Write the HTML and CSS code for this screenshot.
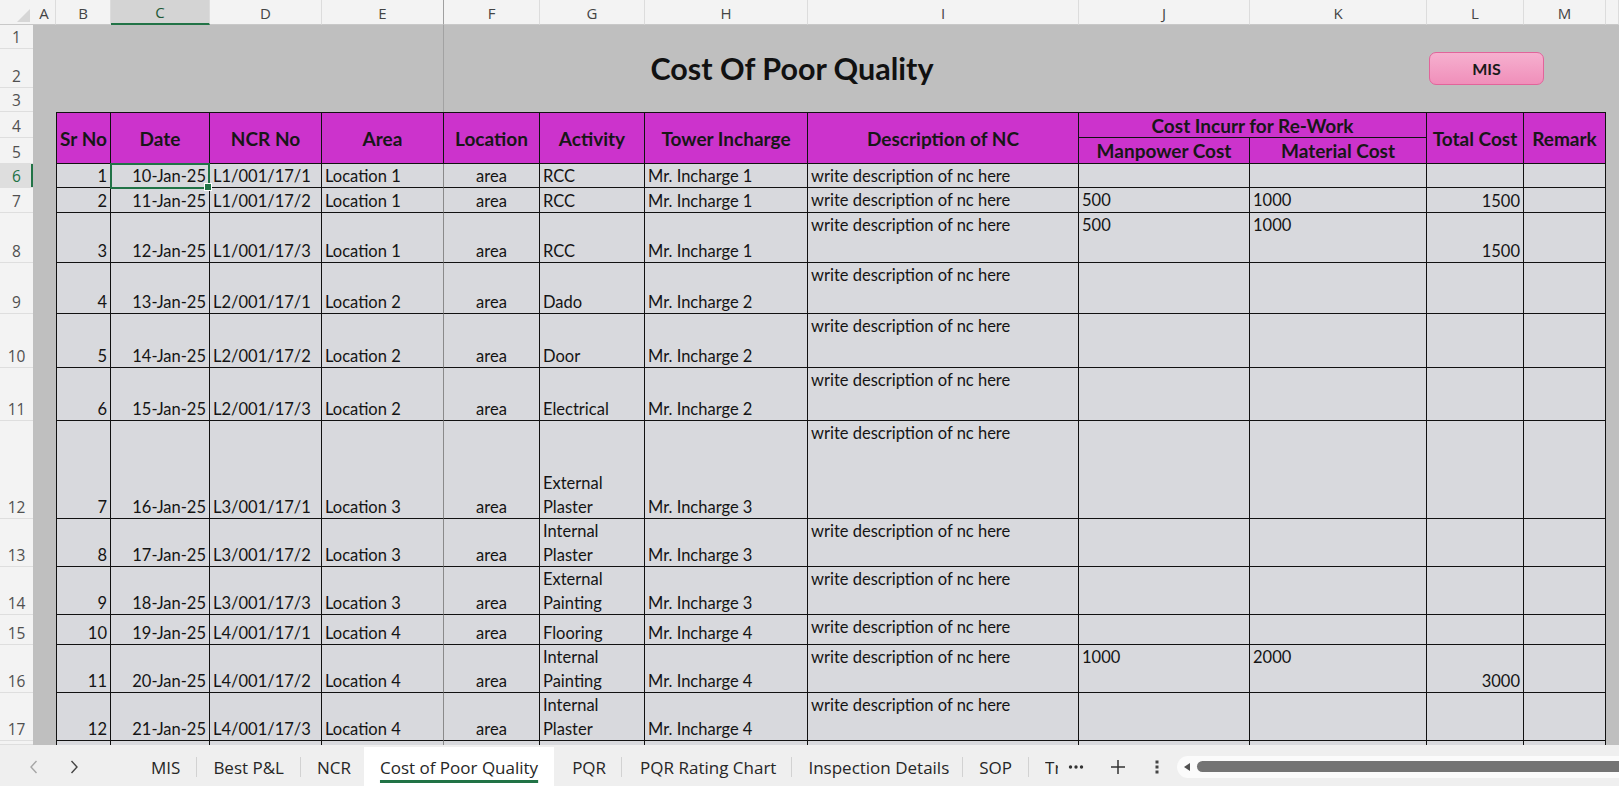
FILE: index.html
```html
<!DOCTYPE html>
<html lang="en">
<head>
<meta charset="utf-8">
<title>Cost Of Poor Quality</title>
<link rel="stylesheet" href="styles.css">
</head>
<body>
<div class="app">
  <div class="sheet">
    <!-- column headers -->
    <div class="corner"><svg width="33" height="25" viewBox="0 0 33 25"><polygon points="17,22 30,22 30,9" fill="#d6d6d6"/></svg></div>
    <div class="ch">A</div>
    <div class="ch">B</div>
    <div class="ch sel">C</div>
    <div class="ch">D</div>
    <div class="ch fz">E</div>
    <div class="ch">F</div>
    <div class="ch">G</div>
    <div class="ch">H</div>
    <div class="ch">I</div>
    <div class="ch">J</div>
    <div class="ch">K</div>
    <div class="ch">L</div>
    <div class="ch">M</div>
    <div class="ch"></div>

    <!-- rows 1-3 -->
    <div class="rh">1</div>
    <div class="banner">
      <h1 class="title">Cost Of Poor Quality</h1>
      <div class="mis-btn">MIS</div>
    </div>
    <div class="rh">2</div>
    <div class="rh">3</div>

    <!-- rows 4-5 : table header -->
    <div class="rh">4</div>
    <div class="side side-a"></div>
    <div class="hd t l r2">Sr No</div>
    <div class="hd t r2">Date</div>
    <div class="hd t r2">NCR No</div>
    <div class="hd t r2">Area</div>
    <div class="hd t r2">Location</div>
    <div class="hd t r2">Activity</div>
    <div class="hd t r2">Tower Incharge</div>
    <div class="hd t r2">Description of NC</div>
    <div class="hd t c2">Cost Incurr for Re-Work</div>
    <div class="hd t r2">Total Cost</div>
    <div class="hd t r2">Remark</div>
    <div class="side side-n"></div>
    <div class="rh">5</div>
    <div class="hd">Manpower Cost</div>
    <div class="hd">Material Cost</div>

    <!-- row 6 -->
    <div class="rh sel">6</div>
    <div class="c l r">1</div>
    <div class="c r cur">10-Jan-25</div>
    <div class="c">L1/001/17/1</div>
    <div class="c fz">Location 1</div>
    <div class="c ctr">area</div>
    <div class="c">RCC</div>
    <div class="c">Mr. Incharge 1</div>
    <div class="c top">write description of nc here</div>
    <div class="c"></div>
    <div class="c"></div>
    <div class="c r"></div>
    <div class="c"></div>

    <!-- row 7 -->
    <div class="rh">7</div>
    <div class="c l r">2</div>
    <div class="c r">11-Jan-25</div>
    <div class="c">L1/001/17/2</div>
    <div class="c fz">Location 1</div>
    <div class="c ctr">area</div>
    <div class="c">RCC</div>
    <div class="c">Mr. Incharge 1</div>
    <div class="c top">write description of nc here</div>
    <div class="c top">500</div>
    <div class="c top">1000</div>
    <div class="c r">1500</div>
    <div class="c"></div>

    <!-- row 8 -->
    <div class="rh">8</div>
    <div class="c l r">3</div>
    <div class="c r">12-Jan-25</div>
    <div class="c">L1/001/17/3</div>
    <div class="c fz">Location 1</div>
    <div class="c ctr">area</div>
    <div class="c">RCC</div>
    <div class="c">Mr. Incharge 1</div>
    <div class="c top">write description of nc here</div>
    <div class="c top">500</div>
    <div class="c top">1000</div>
    <div class="c r">1500</div>
    <div class="c"></div>

    <!-- row 9 -->
    <div class="rh">9</div>
    <div class="c l r">4</div>
    <div class="c r">13-Jan-25</div>
    <div class="c">L2/001/17/1</div>
    <div class="c fz">Location 2</div>
    <div class="c ctr">area</div>
    <div class="c">Dado</div>
    <div class="c">Mr. Incharge 2</div>
    <div class="c top">write description of nc here</div>
    <div class="c"></div>
    <div class="c"></div>
    <div class="c r"></div>
    <div class="c"></div>

    <!-- row 10 -->
    <div class="rh">10</div>
    <div class="c l r">5</div>
    <div class="c r">14-Jan-25</div>
    <div class="c">L2/001/17/2</div>
    <div class="c fz">Location 2</div>
    <div class="c ctr">area</div>
    <div class="c">Door</div>
    <div class="c">Mr. Incharge 2</div>
    <div class="c top">write description of nc here</div>
    <div class="c"></div>
    <div class="c"></div>
    <div class="c r"></div>
    <div class="c"></div>

    <!-- row 11 -->
    <div class="rh">11</div>
    <div class="c l r">6</div>
    <div class="c r">15-Jan-25</div>
    <div class="c">L2/001/17/3</div>
    <div class="c fz">Location 2</div>
    <div class="c ctr">area</div>
    <div class="c">Electrical</div>
    <div class="c">Mr. Incharge 2</div>
    <div class="c top">write description of nc here</div>
    <div class="c"></div>
    <div class="c"></div>
    <div class="c r"></div>
    <div class="c"></div>

    <!-- row 12 -->
    <div class="rh">12</div>
    <div class="c l r">7</div>
    <div class="c r">16-Jan-25</div>
    <div class="c">L3/001/17/1</div>
    <div class="c fz">Location 3</div>
    <div class="c ctr">area</div>
    <div class="c wr"><span>External<br>Plaster</span></div>
    <div class="c">Mr. Incharge 3</div>
    <div class="c top">write description of nc here</div>
    <div class="c"></div>
    <div class="c"></div>
    <div class="c r"></div>
    <div class="c"></div>

    <!-- row 13 -->
    <div class="rh">13</div>
    <div class="c l r">8</div>
    <div class="c r">17-Jan-25</div>
    <div class="c">L3/001/17/2</div>
    <div class="c fz">Location 3</div>
    <div class="c ctr">area</div>
    <div class="c wr"><span>Internal<br>Plaster</span></div>
    <div class="c">Mr. Incharge 3</div>
    <div class="c top">write description of nc here</div>
    <div class="c"></div>
    <div class="c"></div>
    <div class="c r"></div>
    <div class="c"></div>

    <!-- row 14 -->
    <div class="rh">14</div>
    <div class="c l r">9</div>
    <div class="c r">18-Jan-25</div>
    <div class="c">L3/001/17/3</div>
    <div class="c fz">Location 3</div>
    <div class="c ctr">area</div>
    <div class="c wr"><span>External<br>Painting</span></div>
    <div class="c">Mr. Incharge 3</div>
    <div class="c top">write description of nc here</div>
    <div class="c"></div>
    <div class="c"></div>
    <div class="c r"></div>
    <div class="c"></div>

    <!-- row 15 -->
    <div class="rh">15</div>
    <div class="c l r">10</div>
    <div class="c r">19-Jan-25</div>
    <div class="c">L4/001/17/1</div>
    <div class="c fz">Location 4</div>
    <div class="c ctr">area</div>
    <div class="c">Flooring</div>
    <div class="c">Mr. Incharge 4</div>
    <div class="c top">write description of nc here</div>
    <div class="c"></div>
    <div class="c"></div>
    <div class="c r"></div>
    <div class="c"></div>

    <!-- row 16 -->
    <div class="rh">16</div>
    <div class="c l r">11</div>
    <div class="c r">20-Jan-25</div>
    <div class="c">L4/001/17/2</div>
    <div class="c fz">Location 4</div>
    <div class="c ctr">area</div>
    <div class="c wr"><span>Internal<br>Painting</span></div>
    <div class="c">Mr. Incharge 4</div>
    <div class="c top">write description of nc here</div>
    <div class="c top">1000</div>
    <div class="c top">2000</div>
    <div class="c r">3000</div>
    <div class="c"></div>

    <!-- row 17 -->
    <div class="rh">17</div>
    <div class="c l r">12</div>
    <div class="c r">21-Jan-25</div>
    <div class="c">L4/001/17/3</div>
    <div class="c fz">Location 4</div>
    <div class="c ctr">area</div>
    <div class="c wr"><span>Internal<br>Plaster</span></div>
    <div class="c">Mr. Incharge 4</div>
    <div class="c top">write description of nc here</div>
    <div class="c"></div>
    <div class="c"></div>
    <div class="c r"></div>
    <div class="c"></div>

    <!-- row 18 (partially visible) -->
    <div class="rh"></div>
    <div class="stub l"></div>
    <div class="stub"></div>
    <div class="stub"></div>
    <div class="stub fz"></div>
    <div class="stub"></div>
    <div class="stub"></div>
    <div class="stub"></div>
    <div class="stub"></div>
    <div class="stub"></div>
    <div class="stub"></div>
    <div class="stub"></div>
    <div class="stub"></div>
  </div>

  <div class="tabbar">
    <div class="nav">
      <div class="navbtn"><svg width="10" height="16" viewBox="0 0 10 16"><path d="M7.5 2 L2 8 L7.5 14" fill="none" stroke="#a6a6a6" stroke-width="1.4"/></svg></div>
      <div class="navbtn"><svg width="10" height="16" viewBox="0 0 10 16"><path d="M2.5 2 L8 8 L2.5 14" fill="none" stroke="#444" stroke-width="1.4"/></svg></div>
    </div>
    <div class="tab">MIS</div>
    <div class="sep"></div>
    <div class="tab">Best P&amp;L</div>
    <div class="sep"></div>
    <div class="tab tight">NCR</div>
    <div class="tab active"><span>Cost of Poor Quality</span></div>
    <div class="tab wide">PQR</div>
    <div class="sep"></div>
    <div class="tab wide">PQR Rating Chart</div>
    <div class="sep"></div>
    <div class="tab tight">Inspection Details</div>
    <div class="sep"></div>
    <div class="tab">SOP</div>
    <div class="sep"></div>
    <div class="tab clip"><span>Tr</span></div>
    <div class="iconbtn more"><svg width="16" height="6" viewBox="0 0 16 6"><circle cx="2.5" cy="3" r="1.7" fill="#333"/><circle cx="8" cy="3" r="1.7" fill="#333"/><circle cx="13.5" cy="3" r="1.7" fill="#333"/></svg></div>
    <div class="iconbtn add"><svg width="16" height="16" viewBox="0 0 16 16"><path d="M8 1 V15 M1 8 H15" stroke="#333" stroke-width="1.5" fill="none"/></svg></div>
    <div class="iconbtn menu"><svg width="6" height="16" viewBox="0 0 6 16"><rect x="1.5" y="1.5" width="3" height="3" fill="#444"/><rect x="1.5" y="6.5" width="3" height="3" fill="#444"/><rect x="1.5" y="11.5" width="3" height="3" fill="#444"/></svg></div>
    <div class="hscroll">
      <div class="arrow-l"></div>
      <div class="thumb"></div>
    </div>
  </div>
</div>
</body>
</html>
```

FILE: styles.css
```css
* { box-sizing: border-box; }

html, body {
  margin: 0;
  padding: 0;
}

body {
  width: 1619px;
  height: 786px;
  overflow: hidden;
  background: #ffffff;
  font-family: Lato, "Open Sans", sans-serif;
}

.app {
  display: flex;
  flex-direction: column;
  height: 786px;
}

/* ---------- sheet grid ---------- */
.sheet {
  flex: none;
  height: 745px;
  overflow: hidden;
  display: grid;
  grid-template-columns: 33px 23px 55px 99px 112px 122px 96px 105px 163px 271px 171px 177px 97px 82px 13px;
  grid-template-rows: 25px 24px 39px 24px 26px 26px 24px 25px 50px 51px 54px 53px 98px 48px 48px 30px 48px 48px 4px;
  background: #bfbfbf;
}

/* column headers */
.corner {
  background: #f3f3f3;
  border-bottom: 1px solid #c8c8c8;
}
.corner svg { display: block; }

.ch {
  background: #f3f3f3;
  border-right: 1px solid #dcdcdc;
  border-bottom: 1px solid #c8c8c8;
  font: 15px "Open Sans", sans-serif;
  color: #444;
  display: flex;
  align-items: center;
  justify-content: center;
  padding-top: 1px;
}
.ch.sel {
  background: #d4d4d4;
  color: #1d5a37;
  border-bottom: 2px solid #217346;
}
.ch.fz { border-right-color: #9f9f9f; }

/* row headers */
.rh {
  grid-column: 1;
  background: #f3f3f3;
  border-bottom: 1px solid #dedede;
  font: 15.5px "Open Sans", sans-serif;
  color: #505050;
  line-height: 21px;
  display: flex;
  align-items: flex-end;
  justify-content: center;
}
.rh.sel {
  background: #dedede;
  color: #217346;
  box-shadow: inset -2px 0 0 #217346;
}

/* title band rows 1-3 */
.banner {
  grid-column: 2 / -1;
  grid-row: span 3;
  position: relative;
  display: grid;
  grid-template-rows: 24px 39px 24px;
  background:
    linear-gradient(to right, transparent 410px, #a2a2a2 410px, #a2a2a2 411px, transparent 411px),
    #bfbfbf;
}
.title {
  grid-row: 2;
  align-self: end;
  margin: 0;
  padding: 0 68px 2px 0;
  text-align: center;
  font: 700 30.5px Lato, sans-serif;
  line-height: 36px;
  color: #111;
}
.mis-btn {
  position: absolute;
  left: 1396px;
  top: 27px;
  width: 115px;
  height: 33px;
  border: 1px solid #e2649b;
  border-radius: 7px;
  background: linear-gradient(#f6b0cf, #f08fba);
  display: flex;
  align-items: center;
  justify-content: center;
  font: 700 16px Lato, sans-serif;
  color: #1a1a1a;
}

/* grey side strips (column A and beyond M) */
.side {
  grid-row: span 15;
  background: #bfbfbf;
}
.side-a { grid-column: 2; }
.side-n { grid-column: 15; }

/* table header */
.hd {
  background: #cc33cc;
  border-right: 1px solid #111;
  border-bottom: 1px solid #111;
  font: 700 19px Lato, sans-serif;
  color: #171717;
  white-space: nowrap;
  display: flex;
  align-items: center;
  justify-content: center;
}
.hd.t { border-top: 1px solid #111; }
.hd.l { border-left: 1px solid #111; }
.r2 { grid-row: span 2; }
.c2 { grid-column: span 2; }

/* data cells */
.c {
  background: #d8d9dd;
  border-right: 1px solid #111;
  border-bottom: 1px solid #111;
  padding: 0 3px;
  font: 16.5px Lato, sans-serif;
  line-height: 21px;
  color: #141414;
  white-space: nowrap;
  overflow: hidden;
  display: flex;
  flex-direction: column;
  justify-content: flex-end;
}
.c.l, .stub.l { border-left: 1px solid #111; }
.c.r { text-align: right; }
.c.ctr { text-align: center; }
.c.top { justify-content: flex-start; padding-top: 2px; }
.c.fz, .stub.fz { border-right-color: #8a8a8a; }
.c.wr { line-height: 23.3px; }
.c.wr span { position: relative; top: 1px; }

.c.cur {
  position: relative;
  z-index: 2;
  overflow: visible;
}
.c.cur::before {
  content: "";
  position: absolute;
  left: -1px;
  right: -1px;
  top: -1px;
  bottom: -2px;
  border: 2px solid #217346;
}
.c.cur::after {
  content: "";
  position: absolute;
  right: -3px;
  bottom: -4px;
  width: 6px;
  height: 6px;
  background: #217346;
  border: 1px solid #ffffff;
}

.stub {
  background: #d8d9dd;
  border-right: 1px solid #111;
}

/* ---------- sheet tab bar ---------- */
.tabbar {
  flex: none;
  height: 41px;
  background: #efefef;
  display: flex;
  align-items: stretch;
  font: 17px "Open Sans", sans-serif;
  color: #262626;
}

.nav {
  width: 135px;
  flex: none;
  display: flex;
  padding-left: 14px;
}
.navbtn {
  width: 40px;
  display: flex;
  align-items: center;
  justify-content: center;
  padding-top: 2px;
}
.navbtn svg { display: block; }

.tab {
  flex: none;
  padding: 3px 16px 0;
  display: flex;
  align-items: center;
  white-space: nowrap;
}
.tab.tight { padding-right: 13px; }
.tab.wide { padding-left: 18px; padding-right: 15px; }
.tab.active {
  background: #ffffff;
  margin-top: 2px;
  padding-top: 1px;
}
.tab.active span {
  text-decoration: underline 3px #217346;
  text-decoration-skip-ink: none;
  text-underline-offset: 6px;
}
.tab.clip { padding-right: 0; }
.tab.clip span {
  display: block;
  width: 13px;
  overflow: hidden;
}

.sep {
  flex: none;
  width: 1px;
  height: 20px;
  align-self: center;
  margin-top: 3px;
  background: #d2d2d2;
}

.iconbtn {
  flex: none;
  display: flex;
  align-items: center;
  justify-content: center;
  padding-top: 2px;
}
.iconbtn svg { display: block; }
.iconbtn.more { width: 40px; padding-right: 5px; }
.iconbtn.add { width: 40px; }
.iconbtn.menu { width: 37px; }

.hscroll {
  flex: 1;
  align-self: center;
  margin: 2px 0 0 2px;
  height: 22px;
  background: #fbfbfb;
  border-radius: 11px 0 0 11px;
  display: flex;
  align-items: center;
  padding-left: 7px;
}
.arrow-l {
  flex: none;
  width: 0;
  height: 0;
  border-top: 4.5px solid transparent;
  border-bottom: 4.5px solid transparent;
  border-right: 6px solid #505050;
}
.thumb {
  flex: 1;
  height: 11px;
  margin-left: 7px;
  background: #747474;
  border-radius: 6px 0 0 6px;
}
```
